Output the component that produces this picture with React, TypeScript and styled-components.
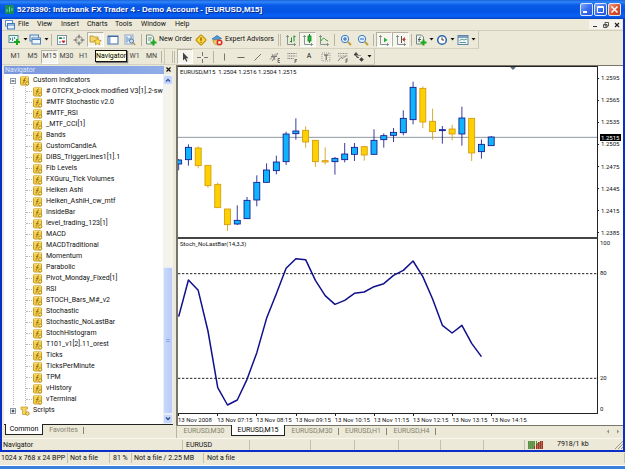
import React from 'react';
import styled, { createGlobalStyle, css } from 'styled-components';

const Global = createGlobalStyle`
  * { box-sizing: border-box; }
  body { margin: 0; background: #3b81dc; }
  button, a, li, ul, span { font: inherit; }
  button { border: 0; padding: 0; margin: 0; background: none; color: inherit; }
  ul { list-style: none; margin: 0; padding: 0; }
  svg { display: block; flex: none; }
`;

const face = '#ece9d8';
const line = '#b8b4a3';

const Desktop = styled.div`
  min-height: 100vh;
  display: flex;
  flex-direction: column;
  padding-bottom: 3px;
  background: #3b81dc;
  color: #111;
  font: 7px/11px Roboto, "Liberation Sans", sans-serif;
  white-space: nowrap;
`;
const Window = styled.div`
  flex: 1;
  display: flex;
  flex-direction: column;
  border: solid #0a2fc8;
  border-width: 0 2px 2px;
  background: ${face};
`;
const TitleBar = styled.header`
  height: 19px;
  margin: 0 -2px;
  padding: 0 4px 0 5px;
  display: flex;
  align-items: center;
  gap: 1px;
  color: #fff;
  background: linear-gradient(#1c62d8 0, #2f86fb 2px, #0a5be8 5px, #0454e4 12px, #0a62f8 16px, #0340c0 19px);
`;
const Title = styled.h1`
  flex: 1;
  margin: 0;
  padding-left: 2px;
  font: bold 8px/12px "Liberation Sans", Arial, sans-serif;
  text-shadow: 1px 1px 0 #0a2c8c;
`;
const CaptionButton = styled.button<{ $close?: boolean }>`
  width: 13px;
  height: 13px;
  display: grid;
  place-items: center;
  border: 1px solid #dbe6fb;
  border-radius: 2px;
  background: ${p => p.$close
    ? 'linear-gradient(135deg, #f0a088, #e0552f 50%, #c03a18)'
    : 'linear-gradient(135deg, #7fa8f8, #3a6ff0 50%, #2450d0)'};
`;
const MenuBar = styled.nav`
  height: 12px;
  padding: 0 1px 0 3px;
  display: flex;
  align-items: center;
  border-bottom: 1px solid #d2cebc;
`;
const MenuItem = styled.button<{ $w: number }>`
  width: ${p => p.$w}px;
  text-align: left;
`;
const Push = styled.div`flex: 1;`;
const ChildButton = styled.button`
  width: 11px;
  height: 9px;
  display: grid;
  place-items: center;
  background: #f6f4ec;
`;
const ToolRow = styled.div<{ $h: number }>`
  height: ${p => p.$h}px;
  display: flex;
`;
const ToolBand = styled.div`
  display: flex;
  align-items: center;
  padding: 0 1px 0 5px;
  border-right: 1px solid #cbc7b5;
  border-bottom: 1px solid #d6d2c0;
`;
const Tool = styled.button<{ $w: number; $on?: boolean }>`
  width: ${p => p.$w}px;
  height: 15px;
  display: flex;
  align-items: center;
  justify-content: center;
  gap: 2px;
  ${p => p.$on && css`
    background: #f7f6ee;
    border: solid #b4b1a0;
    border-width: 1px;
    border-right-color: #fff;
    border-bottom-color: #fff;
  `}
`;
const Period = styled(Tool)`
  height: 14px;
  color: #444;
`;
const Sep = styled.span<{ $w: number }>`
  width: ${p => p.$w}px;
  height: 12px;
  background: linear-gradient(${line}, ${line}) center / 1px 100% no-repeat;
`;
const Grip = styled.span`
  width: 3px;
  height: 12px;
  margin: 0 2px;
  border: solid #c0bcab;
  border-width: 0 1px;
`;
const TipAnchor = styled.div`position: relative;`;
const Tip = styled.div`
  position: absolute;
  z-index: 2;
  left: 8px;
  top: 18px;
  line-height: 10px;
  color: #000;
  background: #ffffe1;
  border: 1px solid #111;
  box-shadow: 1px 1px 1px #777;
`;
const Workspace = styled.main`
  flex: 1;
  display: flex;
  min-height: 0;
`;
const NavPanel = styled.aside`
  width: 174px;
  display: flex;
  flex-direction: column;
  padding: 0 3px 2px 2px;
`;
const NavHead = styled.div`
  height: 9px;
  display: flex;
  align-items: center;
  justify-content: space-between;
`;
const NavTitle = styled.h2`
  flex: 1;
  margin: 0;
  padding-left: 1px;
  font: inherit;
  line-height: 8px;
  color: #dfe8fa;
  background: linear-gradient(90deg, #7b97dc, #8fade8);
`;
const CloseButton = styled.button`
  width: 9px;
  height: 8px;
  display: grid;
  place-items: center;
`;
const TreeFrame = styled.div`
  flex: 1;
  display: flex;
  background: #fff;
`;
const Tree = styled.ul`
  flex: 1;
  min-width: 0;
  padding: 1px 0 0 5px;
`;
const Branch = styled.div`
  margin: 0 0 0 4px;
  padding-left: 11px;
  border-left: 1px dotted #bbb;
`;
const Leaves = styled.ul`
  border-left: 1px dotted #bbb;
`;
const Leaf = styled.li`
  height: 11px;
  display: flex;
  align-items: center;
  gap: 3px;
  &::before {
    content: '';
    flex: none;
    width: 6px;
    margin-right: -2px;
    border-top: 1px dotted #bbb;
  }
`;
const Root = styled.div`
  height: 11px;
  display: flex;
  align-items: center;
  gap: 3px;
`;
const Expander = styled.button`
  width: 8px;
  height: 8px;
  display: grid;
  place-items: center;
`;
const Scroll = styled.div`
  flex: none;
  width: 10px;
  display: flex;
  flex-direction: column;
  padding-top: 1px;
  background: #f4f3ec;
`;
const ScrollButton = styled.button`
  height: 10px;
  display: grid;
  place-items: center;
  border: 1px solid #e8effc;
  border-radius: 2px;
  background: #c6d5fb;
`;
const Track = styled.div<{ $grow: number }>`flex: ${p => p.$grow};`;
const Thumb = styled.div`
  flex: 145;
  display: grid;
  place-items: center;
  border: 1px solid #e4ecfd;
  border-radius: 2px;
  background: linear-gradient(90deg, #c9d8fc, #b9cbf6);
`;
const NavTabs = styled.div`
  height: 12px;
  display: flex;
  padding-left: 1px;
  border-top: 1px solid #222;
`;
const Tab = styled.button<{ $w: number; $on?: boolean; $bar?: boolean }>`
  width: ${p => p.$w}px;
  height: 11px;
  color: #85826f;
  ${p => p.$bar && css`
    background: linear-gradient(#85826f, #85826f) right center / 1px 7px no-repeat;
  `}
  ${p => p.$on && css`
    margin-top: -1px;
    color: #000;
    background: #fff;
    border: solid #222;
    border-width: 0 1px 1px;
  `}
`;
const ChartSide = styled.section`
  flex: 1;
  min-width: 0;
  display: flex;
  flex-direction: column;
`;
const ChartFrame = styled.div`
  flex: 1;
  display: grid;
  grid-template-columns: minmax(0, 1fr) 25px;
  grid-template-rows: minmax(0, 171fr) minmax(0, 177fr) 11px;
  background: #fff;
  border-left: 2px solid #77756a;
  border-top: 1px solid #77756a;
  font-size: 6px;
  line-height: 8px;
`;
const PriceBox = styled.div`
  contain: size;
  display: flex;
  flex-direction: column;
  border: solid #222;
  border-width: 1px 1px 0 0;
`;
const StochBox = styled(PriceBox)`
  border-width: 2px 1px 1px 0;
  border-top-color: #444;
`;
const Caption = styled.div`
  height: 10px;
  padding: 1px 2px 0;
`;
const PriceHead = styled(Caption)`position: relative;`;
const ShiftMarker = styled.svg`
  position: absolute;
  top: 0;
  left: 80%;
  transform: translateX(-50%);
`;
const PlotArea = styled.svg`
  width: 100%;
  flex: 1;
  min-height: 0;
`;
const Scale = styled.div`
  display: flex;
  flex-direction: column;
  justify-content: space-between;
  padding: 8px 0 0;
`;
const Mark = styled.span`
  position: relative;
  display: flex;
  align-items: center;
  gap: 2px;
  &::before {
    content: '';
    width: 1px;
    height: 1px;
    background: #222;
  }
`;
const Current = styled.span`
  position: absolute;
  left: 2px;
  right: 2px;
  bottom: 7px;
  padding-left: 1px;
  line-height: 7px;
  color: #fff;
  background: #000;
`;
const StochScale = styled.div`
  display: grid;
  grid-template-rows: 30fr 104fr 31fr 8px;
  padding: 2px 0 1px 2px;
`;
const Dates = styled.div`
  display: flex;
`;
const DateMark = styled.span`
  flex: 0 0 9.33%;
  padding-top: 2px;
  background: linear-gradient(#222, #222) left top / 1px 2px no-repeat;
`;
const ChartTabs = styled.div`
  height: 13px;
  display: flex;
  align-items: flex-start;
  border-top: 1px solid #77756a;
  border-left: 1px solid ${line};
`;
const TabArrows = styled.div`
  height: 11px;
  display: flex;
  align-items: center;
  gap: 6px;
  padding-right: 3px;
`;
const StatusBar = styled.footer`
  height: 12px;
  display: flex;
  align-items: center;
  border-top: 1px solid #f8f7f0;
`;
const Cell = styled.span<{ $w?: number; $pad?: number }>`
  ${p => (p.$w ? css`width: ${p.$w}px;` : css`flex: 1;`)}
  height: 10px;
  padding-left: ${p => p.$pad ?? 3}px;
  line-height: 10px;
  border-right: 1px solid #c4c0af;
`;
const Traffic = styled.span`
  width: 98px;
  display: flex;
  align-items: center;
  gap: 14px;
  padding-left: 3px;
`;
const Size = styled.span`flex: 1;`;
const ImageBar = styled.footer`
  height: 14px;
  padding-bottom: 1px;
  display: flex;
  align-items: center;
  background: ${face};
  border-bottom: 1px solid #fff;
`;

const Ico = ({ w = 12, h = 12, children }: { w?: number; h?: number; children: React.ReactNode }) => (
  <svg width={w} height={h} viewBox={`0 0 ${w} ${h}`} fill="none" aria-hidden="true">{children}</svg>
);
const Drop = () => <Ico w={5} h={3}><path d="M.5 0h4L2.500 2.500z" fill="#111" /></Ico>;
const Plus = ({ x, y }: { x: number; y: number }) => (
  <path d={`M${x} ${y - 3}v6M${x - 3} ${y}h6`} stroke="#17a81c" strokeWidth="2" />
);
const FxIcon = () => (
  <Ico w={10} h={10}>
    <rect x=".5" y=".5" width="8" height="8.500" rx="1" fill="#f3cf4c" stroke="#c9a030" />
    <path d="M1 1h7" stroke="#fbe99a" />
    <path d="M6 2c-1.500-.3-1.500 1-1.800 3S3.600 7.300 2.600 7M3 4.400h2.600" stroke="#8a6a18" strokeWidth=".9" />
    <circle cx="7.200" cy="7.500" r="1.600" fill="#ffe67a" stroke="#a87c14" strokeWidth=".8" />
  </Ico>
);
const ScriptIcon = () => (
  <Ico w={10} h={10}>
    <path d="M1 1h6.500v2H6v4h2v1.500H2.500v-5H1z" fill="#f3d560" stroke="#c9a030" strokeWidth=".8" />
    <circle cx="7.500" cy="7.500" r="1.700" fill="#ffe67a" stroke="#a87c14" strokeWidth=".8" />
  </Ico>
);
const Axes = () => <path d="M2.500 1v9.500H11M1 2.500h3M9.500 9v3" stroke="#7b8a88" strokeWidth=".9" />;

const icons = {
  addChart: <Ico w={13}><rect x="1" y="1.500" width="9" height="7" fill="#e8f4f4" stroke="#4c8d8d" /><path d="M2.500 6V4M4.500 7V3.500M6.500 5V3" stroke="#4c8d8d" /><Plus x={9} y={8} /></Ico>,
  profiles: <Ico w={13}><rect x="1" y="1" width="8.500" height="6" fill="#dcebfa" stroke="#4e80b8" /><rect x="3" y="4" width="8.500" height="6" fill="#eef6ff" stroke="#4e80b8" /><path d="M3 5.500h8" stroke="#4e80b8" /></Ico>,
  market: <Ico><rect x="1.500" y="1.500" width="9" height="9" fill="#fff" stroke="#7d93a8" /><path d="M3 4.500 4.500 3 6 4.500z" fill="#1d8d2c" stroke="#1d8d2c" /><path d="m6 7 1.500 2L9 7z" fill="#d02c2c" stroke="#d02c2c" /><path d="M3 8h2M7 4h2" stroke="#3469c8" /></Ico>,
  target: <Ico><circle cx="6" cy="6" r="3.500" stroke="#888" /><path d="M6 .5v4M6 7.500v4M.5 6h4M7.500 6h4" stroke="#666" /></Ico>,
  navigator: <Ico w={13}><path d="M1 2h3l1 1h4v5H1z" fill="#f6d76c" stroke="#b98d1c" strokeWidth=".8" /><path d="m8.500 4 1.200 2.200 2.500.4-1.800 1.700.4 2.500-2.300-1.200-2.200 1.200.4-2.500L5 6.600l2.500-.4z" fill="#ffe34c" stroke="#b98d1c" strokeWidth=".7" /></Ico>,
  terminal: <Ico><rect x="1" y="2" width="10" height="8" fill="#fff" stroke="#3e6ba8" /><path d="M1 2.500h10" stroke="#3e6ba8" /><path d="M2.500 3v7" stroke="#7fa6dc" strokeWidth="2" /></Ico>,
  tester: <Ico><rect x="1" y="1" width="8" height="9" fill="#eaf2fb" stroke="#8ba6c4" /><path d="M3 2.500v6M5 4v3M7 2v4" stroke="#5d83b0" /><circle cx="7.500" cy="7" r="2" fill="#cfe6fb" stroke="#557ca8" /><path d="m9 8.500 2.300 2.500" stroke="#c09838" strokeWidth="1.300" /></Ico>,
  order: <Ico><path d="M1.500 1h5l2 2v7h-7z" fill="#eef4f0" stroke="#74917e" /><path d="M3 4h4M3 6h3" stroke="#74917e" /><Plus x={8.500} y={8.500} /></Ico>,
  alert: <Ico><rect x="2.200" y="2.200" width="7.600" height="7.600" rx="1" transform="rotate(45 6 6)" fill="#fcd53c" stroke="#b98a10" /><path d="M6 3.500v3.200M6 7.800v1" stroke="#7a5200" strokeWidth="1.200" /></Ico>,
  expert: <Ico><path d="M1 5 6 1.500 10.500 4.500 6 6z" fill="#4f9ad8" stroke="#2c6ca8" strokeWidth=".7" /><path d="M2 6c0 3 2 5 4.500 5L9 6z" fill="#f3cf6c" stroke="#b08c34" strokeWidth=".7" /><circle cx="8.500" cy="8.500" r="3" fill="#dc3022" /><rect x="7.300" y="7.300" width="2.400" height="2.400" fill="#fff" /></Ico>,
  bars: <Ico><Axes /><path d="M6.500 3.500v5M5 7.500h1.500M9 1.500v6M9 2.500h1.500" stroke="#1a8f2a" /></Ico>,
  candles: <Ico><Axes /><path d="M7.500 0v9" stroke="#137a22" /><rect x="6" y="2" width="3" height="5" fill="#23c03c" stroke="#137a22" strokeWidth=".8" /></Ico>,
  lineChart: <Ico><Axes /><path d="M3 7c2-4 3-3 5-1l2 1" stroke="#2a9f3a" /></Ico>,
  zoomIn: <Ico><circle cx="5" cy="5" r="3.700" fill="#e2f0ff" stroke="#3a7bc8" /><path d="M3 5h4M5 3v4" stroke="#2563b4" /><path d="m8 8 3 3" stroke="#c49a34" strokeWidth="1.800" /></Ico>,
  zoomOut: <Ico><circle cx="5" cy="5" r="3.700" fill="#e2f0ff" stroke="#3a7bc8" /><path d="M3 5h4" stroke="#2563b4" /><path d="m8 8 3 3" stroke="#c49a34" strokeWidth="1.800" /></Ico>,
  scroll: <Ico><Axes /><path d="m6 3.500 3.500 2.500L6 8.500z" fill="#2cab40" /></Ico>,
  shift: <Ico><Axes /><path d="M6.500 2v7" stroke="#555" /><path d="M11 5.500H8M9.500 3.500 7.500 5.500l2 2z" fill="#b03a2a" stroke="#b03a2a" strokeWidth=".6" /></Ico>,
  indicators: <Ico><path d="M1.500 1h5l2 2v7h-7z" fill="#eef4f0" stroke="#74857e" /><path d="M5.500 3C4 3 4.500 5 4 8M3 5.500h3" stroke="#555" /><Plus x={8.500} y={8.500} /></Ico>,
  clock: <Ico><circle cx="6" cy="6" r="4.300" fill="#fff" stroke="#2f68ae" strokeWidth="1.600" /><path d="M6 3.500V6h2" stroke="#333" /></Ico>,
  template: <Ico><rect x="1" y="1.500" width="10" height="9" fill="#f4f9ff" stroke="#5d83ab" /><path d="M1 3h10" stroke="#5d83ab" strokeWidth="1.500" /><path d="M2.500 6.500 5 5l2 1 3-1M2.500 8.500H9" stroke="#5d9a8a" /></Ico>,
  cursor: <Ico><path d="M4 1.500v8l1.900-1.700 1.300 2.900 1.200-.6L7.100 7.300h2.500z" fill="#444" /></Ico>,
  cross: <Ico><path d="M6.500 1v4M6.500 8v4M1 6.500h4M8 6.500h4" stroke="#777" /></Ico>,
  vert: <Ico><path d="M6.500 2.500v7" stroke="#777" /></Ico>,
  horiz: <Ico><path d="M2.500 6.500h7" stroke="#666" /></Ico>,
  diag: <Ico><path d="M2.500 9.500 9 3" stroke="#777" /></Ico>,
  channel: <Ico><path d="m1 8.500 6-6M3 10l6-8M2 5.500h6M3 3l3 6" stroke="#777" strokeWidth=".9" /><path d="M11 7.500H9v4h2M9 9.500h1.800" stroke="#555" strokeWidth=".8" /></Ico>,
  fibo: <Ico><path d="M1.500 2.500h9M1.500 5h9M1.500 7.500h6" stroke="#777" strokeDasharray="1 .7" /><path d="M11 8.500H9V12M9 10h1.800" stroke="#555" strokeWidth=".8" /></Ico>,
  label: <Ico><rect x="2" y="2" width="8" height="8" stroke="#999" strokeDasharray="1 1" /><path d="M4 4h4.500M6.200 4v5" stroke="#555" /></Ico>,
  fan: <Ico><path d="M1 2.500h10M1 5h10" stroke="#888" strokeDasharray="1 .7" /><path d="m1 10 3-3.500 2 1 3-3" stroke="#777" strokeWidth=".9" /><path d="M11 8H9v4M9 10h1.800" stroke="#555" strokeWidth=".8" /></Ico>,
  arrows: <Ico><path d="m3 1.500 2 2.500H1zM2.500 4l1.500 2.500h2" fill="#444" stroke="#444" strokeWidth=".8" /><path d="M5 4.500h3M8.500 6.500 10.500 8.500 8.500 10.500 6.500 8.500z" fill="#444" stroke="#444" strokeWidth=".5" /></Ico>,
};

type IconName = keyof typeof icons;
interface ToolSpec { icon?: IconName; w: number; on?: boolean; drop?: boolean; text?: string; sep?: boolean; name?: string }

const renderTool = (t: ToolSpec, i: number) =>
  t.sep ? <Sep key={i} $w={t.w} /> : (
    <Tool key={i} $w={t.w} $on={t.on} aria-label={t.name ?? t.icon}>
      {t.icon && icons[t.icon]}
      {t.text}
      {t.drop && <Drop />}
    </Tool>
  );

const standardA: ToolSpec[] = [
  { icon: 'addChart', w: 21, drop: true }, { icon: 'profiles', w: 21, drop: true }, { sep: true, w: 5 },
  { icon: 'market', w: 16 }, { icon: 'target', w: 17 },
];
const standardB: ToolSpec[] = [
  { icon: 'terminal', w: 17 }, { icon: 'tester', w: 17 }, { sep: true, w: 6 },
  { icon: 'order', w: 49, text: 'New Order', name: 'New Order' }, { icon: 'alert', w: 16 },
  { icon: 'expert', w: 67, text: 'Expert Advisors', name: 'Expert Advisors' },
];
const charting: ToolSpec[] = [
  { icon: 'bars', w: 16 }, { icon: 'candles', w: 17, on: true }, { icon: 'lineChart', w: 16 }, { sep: true, w: 5 },
  { icon: 'zoomIn', w: 17 }, { icon: 'zoomOut', w: 17 }, { sep: true, w: 5 },
  { icon: 'scroll', w: 16, on: true }, { icon: 'shift', w: 17, on: true }, { sep: true, w: 5 },
  { icon: 'indicators', w: 21, drop: true }, { icon: 'clock', w: 21, drop: true }, { icon: 'template', w: 21, drop: true },
];
const drawing: ToolSpec[] = [
  { icon: 'cursor', w: 16, on: true }, { icon: 'cross', w: 18 }, { sep: true, w: 5 },
  { icon: 'vert', w: 16 }, { icon: 'horiz', w: 17 }, { icon: 'diag', w: 17 }, { icon: 'channel', w: 17 },
  { icon: 'fibo', w: 17 }, { text: 'A', w: 18, name: 'Text' }, { icon: 'label', w: 16 }, { icon: 'fan', w: 17 },
  { icon: 'arrows', w: 22, drop: true },
];
const periods: { code: string; covered?: boolean }[] = [
  { code: 'M1' }, { code: 'M5' }, { code: 'M15' }, { code: 'M30' }, { code: 'H1' },
  { code: 'H4', covered: true }, { code: 'D1', covered: true }, { code: 'W1' }, { code: 'MN' },
];
const menus: [string, number][] = [['File', 19], ['View', 24], ['Insert', 26], ['Charts', 28], ['Tools', 26], ['Window', 34], ['Help', 20]];

const indicators = [
  '# OTCFX_b-clock modified V3[1].2-sw', '#MTF Stochastic v2.0', '#MTF_RSI', '_MTF_CCI[1]', 'Bands',
  'CustomCandleA', 'DIBS_TriggerLines1[1].1', 'Fib Levels', 'FXGuru_Tick Volumes', 'Heiken Ashi',
  'Heiken_AshiH_cw_mtf', 'InsideBar', 'level_trading_123[1]', 'MACD', 'MACDTraditional', 'Momentum',
  'Parabolic', 'Pivot_Monday_Fixed[1]', 'RSI', 'STOCH_Bars_M#_v2', 'Stochastic', 'Stochastic_NoLastBar',
  'StochHistogram', 'T101_v1[2].11_orest', 'Ticks', 'TicksPerMinute', 'TPM', 'vHistory', 'vTerminal',
];

type Candle = [high: number, top: number, bottom: number, low: number, up: 0 | 1];
const candles: Candle[] = [
  [291, 294, 306, 325, 1], [247, 256, 293, 311, 1], [253, 258, 311, 319, 0], [310, 310, 371, 377, 0],
  [362, 367, 437, 437, 0], [441, 441, 488, 507, 0], [430, 475, 486, 489, 1], [405, 415, 470, 470, 1],
  [340, 361, 414, 433, 1], [304, 324, 361, 361, 1], [281, 300, 326, 337, 1], [209, 216, 299, 309, 1],
  [169, 207, 215, 233, 1], [193, 205, 240, 257, 0], [235, 235, 299, 315, 0], [256, 296, 300, 308, 0],
  [285, 289, 299, 338, 1], [243, 276, 293, 301, 1], [243, 256, 277, 297, 1], [251, 254, 279, 296, 0],
  [202, 235, 277, 277, 1], [214, 221, 233, 257, 1], [198, 211, 220, 240, 1], [145, 169, 212, 220, 1],
  [59, 76, 173, 187, 1], [73, 79, 180, 198, 0], [140, 178, 209, 233, 0], [192, 203, 206, 245, 1],
  [188, 201, 216, 235, 0], [134, 168, 216, 251, 1], [169, 169, 273, 297, 0], [232, 247, 269, 290, 1],
  [222, 225, 251, 251, 1],
];
const stoch = [
  242, 132, 163, 285, 455, 507, 492, 430, 350, 247, 173, 97, 68, 71, 133, 179, 205, 193, 172, 168, 152,
  143, 118, 103, 75, 122, 189, 268, 291, 268, 322, 362,
];
const step = 29.3;
const barX = (i: number) => 2 + i * step;

const PricePlot = () => (
  <PlotArea viewBox="0 45 1257 480" preserveAspectRatio="none" role="img" aria-label="EURUSD M15 candles">
    <path d="M0 226h1257" stroke="#8e98a2" strokeWidth="3" />
    {candles.map(([hi, top, bot, lo, up], i) => {
      const x = barX(i);
      const edge = up ? '#14148c' : '#d09a10';
      return (
        <g key={i}>
          <path d={`M${x} ${hi}V${lo}`} stroke={edge} strokeWidth="2.500" />
          <rect x={x - 9} y={top} width="18" height={bot - top} fill={up ? '#10b4fc' : '#ffd000'} stroke={edge} strokeWidth="2.500" />
        </g>
      );
    })}
  </PlotArea>
);
const StochPlot = () => (
  <PlotArea viewBox="0 39 1257 492" preserveAspectRatio="none" role="img" aria-label="Stochastic oscillator">
    <path d="M0 113h1257M0 427h1257" stroke="#222" strokeWidth="3" strokeDasharray="7 5" />
    <polyline points={stoch.map((y, i) => `${barX(i)},${y}`).join(' ')} fill="none" stroke="#10108c" strokeWidth="4.500" strokeLinejoin="round" />
  </PlotArea>
);

export default function App() {
  return (
    <Desktop>
      <Global />
      <Window>
        <TitleBar>
          <Ico w={9} h={9}><rect width="9" height="9" rx="1" fill="#1b8a5c" /><path d="M2 7V4M4.500 7V2M7 6V3" stroke="#6fe0a4" /></Ico>
          <Title>5278390: Interbank FX Trader 4 - Demo Account - [EURUSD,M15]</Title>
          <CaptionButton aria-label="Minimize"><Ico w={9} h={9}><path d="M1 7h4" stroke="#fff" strokeWidth="2" /></Ico></CaptionButton>
          <CaptionButton aria-label="Maximize"><Ico w={9} h={9}><path d="M1.500 1.500h6v6h-6zM1 2.500h7" stroke="#fff" /></Ico></CaptionButton>
          <CaptionButton aria-label="Close" $close><Ico w={9} h={9}><path d="m1.500 1.500 6 6m0-6-6 6" stroke="#fff" strokeWidth="1.500" /></Ico></CaptionButton>
        </TitleBar>
        <MenuBar>
          <Ico w={13} h={10}><rect x=".5" y=".5" width="7" height="5.500" fill="#fff" stroke="#5a8cc8" /><rect x="2.500" y="3.500" width="7" height="5.500" fill="#e6f2ff" stroke="#3f78bc" /><path d="M3 5h6" stroke="#3f78bc" /></Ico>
          {menus.map(([m, w]) => <MenuItem key={m} $w={w}>{m}</MenuItem>)}
          <Push />
          <ChildButton aria-label="Minimize chart"><Ico w={6} h={6}><path d="M1 4.500h4" stroke="#333" /></Ico></ChildButton>
          <ChildButton aria-label="Restore chart"><Ico w={6} h={6}><path d="M2 .5h3.500V4H2zM.5 2.500H4v3H.5z" stroke="#333" strokeWidth=".8" /></Ico></ChildButton>
          <ChildButton aria-label="Close chart"><Ico w={6} h={6}><path d="m1 1 4 4m0-4L1 5" stroke="#222" strokeWidth="1.200" /></Ico></ChildButton>
        </MenuBar>
        <ToolRow $h={18}>
          <ToolBand>
            {standardA.map(renderTool)}
            <TipAnchor>
              <Tool $w={17} $on aria-label="Navigator">{icons.navigator}</Tool>
              <Tip role="tooltip">Navigator</Tip>
            </TipAnchor>
            {standardB.map(renderTool)}
            <Grip />
            {charting.map(renderTool)}
          </ToolBand>
        </ToolRow>
        <ToolRow $h={16}>
          <ToolBand>
            {periods.map(({ code, covered }) => (
              <Period key={code} $w={17} $on={code === 'M15'} aria-label={code}>{covered ? null : code}</Period>
            ))}
            <Sep $w={3} />
          </ToolBand>
          <ToolBand>
            <Grip />
            {drawing.map(renderTool)}
          </ToolBand>
        </ToolRow>
        <Workspace>
          <NavPanel>
            <NavHead>
              <NavTitle>Navigator</NavTitle>
              <CloseButton aria-label="Close navigator"><Ico w={5} h={5}><path d="m.5.5 4 4m0-4-4 4" stroke="#111" strokeWidth="1.200" /></Ico></CloseButton>
            </NavHead>
            <TreeFrame>
              <Tree>
                <li>
                  <Root>
                    <Expander aria-label="Collapse"><Ico w={6} h={6}><rect x=".5" y=".5" width="5" height="5" fill="#fff" stroke="#8a9aac" /><path d="M1.500 3h3" stroke="#111" /></Ico></Expander>
                    <FxIcon />Custom Indicators
                  </Root>
                  <Branch>
                    <Leaves>
                      {indicators.map(n => <Leaf key={n}><FxIcon />{n}</Leaf>)}
                    </Leaves>
                  </Branch>
                </li>
                <li>
                  <Root>
                    <Expander aria-label="Expand"><Ico w={6} h={6}><rect x=".5" y=".5" width="5" height="5" fill="#fff" stroke="#8a9aac" /><path d="M1.500 3h3M3 1.500v3" stroke="#111" strokeWidth=".9" /></Ico></Expander>
                    <ScriptIcon />Scripts
                  </Root>
                </li>
              </Tree>
              <Scroll>
                <ScrollButton aria-label="Scroll up"><Ico w={6} h={4}><path d="m1 3.500 2-2 2 2" stroke="#33558c" strokeWidth="1.300" /></Ico></ScrollButton>
                <Track $grow={183} />
                <Thumb><Ico w={4} h={4}><path d="M0 .5h4M0 2.500h4" stroke="#8fa8e4" /></Ico></Thumb>
                <ScrollButton aria-label="Scroll down"><Ico w={6} h={4}><path d="m1 .5 2 2 2-2" stroke="#33558c" strokeWidth="1.300" /></Ico></ScrollButton>
              </Scroll>
            </TreeFrame>
            <NavTabs>
              <Tab $w={38} $on>Common</Tab>
              <Tab $w={41} $bar>Favorites</Tab>
            </NavTabs>
          </NavPanel>
          <ChartSide>
            <ChartFrame>
              <PriceBox>
                <PriceHead>
                  EURUSD,M15 &nbsp;1.2504 1.2516 1.2504 1.2515
                  <ShiftMarker width="6" height="3" viewBox="0 0 6 3"><path d="M0 0h6L3 3z" fill="#5c6f80" /></ShiftMarker>
                </PriceHead>
                <PricePlot />
              </PriceBox>
              <Scale>
                {['1.2595', '1.2565', '1.2535'].map(v => <Mark key={v}>{v}</Mark>)}
                <Mark>1.2505<Current>1.2515</Current></Mark>
                {['1.2475', '1.2445', '1.2415', '1.2385'].map(v => <Mark key={v}>{v}</Mark>)}
              </Scale>
              <StochBox>
                <Caption>Stoch_NoLastBar(14,3,3)</Caption>
                <StochPlot />
              </StochBox>
              <StochScale><span>100</span><span>80</span><span>20</span><span>0</span></StochScale>
              <Dates>
                {['2008', '07:15', '08:15', '09:15', '10:15', '11:15', '12:15', '13:15', '14:15'].map(t => (
                  <DateMark key={t}>13 Nov {t}</DateMark>
                ))}
              </Dates>
            </ChartFrame>
            <ChartTabs>
              <Tab $w={54}>EURUSD,M30</Tab>
              <Tab $w={54} $on>EURUSD,M15</Tab>
              <Tab $w={54} $bar>EURUSD,M30</Tab>
              <Tab $w={48} $bar>EURUSD,H1</Tab>
              <Tab $w={49} $bar>EURUSD,H4</Tab>
              <Push />
              <TabArrows>
                <Ico w={4} h={5}><path d="M3 .5v4L1 2.500z" fill="#888" /></Ico>
                <Ico w={4} h={5}><path d="M1 .5v4l2-2z" fill="#888" /></Ico>
              </TabArrows>
            </ChartTabs>
          </ChartSide>
        </Workspace>
        <StatusBar>
          <Cell $w={181} $pad={1}>Navigator</Cell>
          <Cell $w={67}>EURUSD</Cell>
          <Cell $w={61} /><Cell $w={44} /><Cell $w={44} /><Cell $w={42} /><Cell $w={43} /><Cell />
          <Traffic>
            <Ico w={15} h={8}>
              <path d="M.5 0v8M2.500 0v8M4.500 0v8M6.500 0v5M8.500 0v3" stroke="#4f9a34" />
              <path d="M6.500 5v3M8.500 3v5M10.500 1v7M12.500 0v8M14.500 0v8" stroke="#a8321c" />
              <path d="M1.500 0v8M3.500 0v8M5.500 0v8" stroke="#2f5a1c" strokeWidth=".6" />
              <path d="M9.500 2v6M11.500 1v7M13.500 0v8" stroke="#6a2414" strokeWidth=".6" />
            </Ico>
            <Size>7918/1 kb</Size>
            <Ico w={8} h={8}><path d="m0 8 8-8M3 8l5-5M6 8l2-2" stroke="#9a9786" /></Ico>
          </Traffic>
        </StatusBar>
      </Window>
      <ImageBar>
        <Cell $w={68} $pad={1}>1024 x 768 x 24 BPP</Cell>
        <Cell $w={42} $pad={2}>Not a file</Cell>
        <Cell $w={22}>81 %</Cell>
        <Cell $w={72} $pad={2}>Not a file / 2.25 MB</Cell>
        <Cell>Not a file</Cell>
      </ImageBar>
    </Desktop>
  );
}
